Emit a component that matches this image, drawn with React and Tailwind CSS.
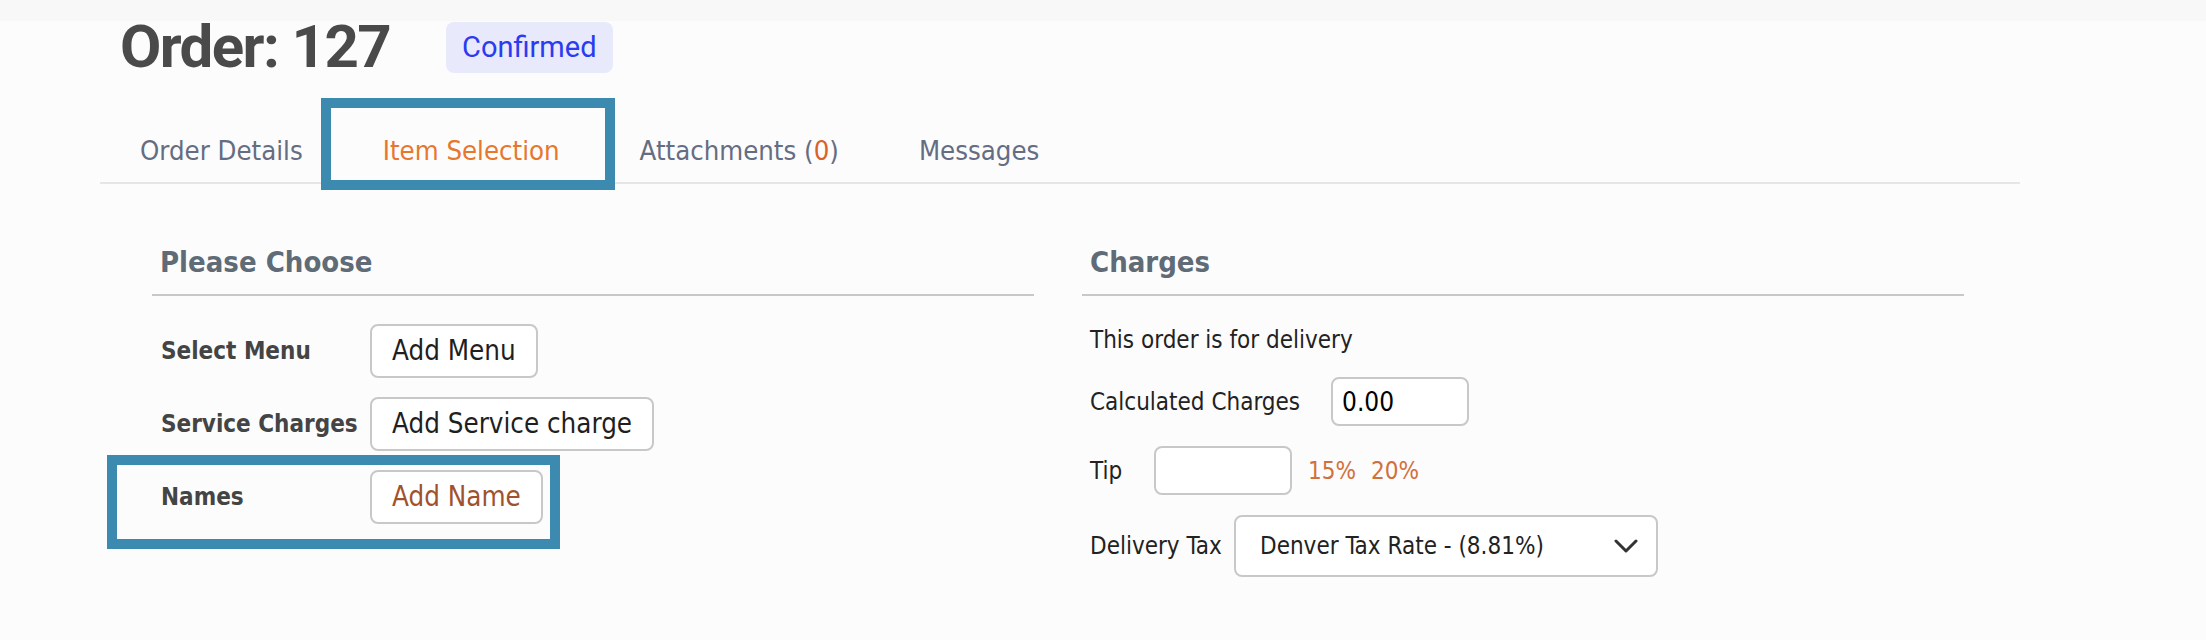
import React from 'react';

const tabs = ['Order Details', 'Item Selection', 'Attachments', 'Messages'];

const ChooseRow = ({ label, action, highlight, brown }) => (
    <div className="relative flex items-center h-[54px]">
        {highlight && (
            <div className="absolute left-[-54px] top-[-15px] w-[453px] h-[94px] border-[10px] border-[#3d8ab0]" />
        )}
        <div className="w-[209px] text-[24px] font-bold text-[#444]">{label}</div>
        <button
            className={`h-[54px] px-[20px] border-2 border-[#c8c8c8] rounded-[8px] bg-white text-[27.5px] ${
                brown ? 'text-[#a0522d]' : 'text-[#1f1f1f]'
            }`}
        >
            {action}
        </button>
    </div>
);

const App = () => {
    return (
        <div className="w-[2206px] min-h-[640px] bg-[#fcfcfc] font-['DejaVu_Sans_Condensed','DejaVu_Sans',sans-serif]">
            <div className="h-[21px] bg-[#f8f8f8]" />

            <div className="ml-[100px] w-[1920px]">
                {/* Header */}
                <div className="flex items-start pl-[20px]">
                    <h1 className="font-['Roboto',sans-serif] font-bold text-[60px] leading-[52px] tracking-[-1.6px] text-[#4a4a4a]">
                        Order: 127
                    </h1>
                    <span className="ml-[56px] mt-[1px] h-[51px] px-[16px] flex items-center rounded-[8px] bg-[#e8eafc] text-[#2b3cf0] text-[29px] font-['Roboto',sans-serif]">
                        Confirmed
                    </span>
                </div>

                {/* Tabs */}
                <div className="mt-[58px] flex border-b-2 border-[#e6e6e6]">
                    {tabs.map((tab) => (
                        <div
                            key={tab}
                            className={`relative px-[40px] pb-[11px] text-[27.3px] leading-[40px] ${
                                tab === 'Item Selection' ? 'text-[#e8772e]' : 'text-[#656d82]'
                            }`}
                        >
                            {tab === 'Item Selection' && (
                                <div className="absolute left-[-22px] right-[-15px] top-[-33px] bottom-[-8px] border-[10px] border-[#3d8ab0]" />
                            )}
                            {tab === 'Attachments' ? (
                                <>
                                    Attachments (<span className="text-[#d9622b]">0</span>)
                                </>
                            ) : (
                                tab
                            )}
                        </div>
                    ))}
                </div>

                {/* Content */}
                <div className="mt-[60px] pl-[52px] pr-[56px] grid grid-cols-2 gap-[48px]">
                    <div>
                        <h2 className="pl-[8px] pb-[14px] border-b-2 border-[#c8c8c8] text-[29px] leading-[36px] font-bold text-[#5f6b76]">
                            Please Choose
                        </h2>
                        <div className="mt-[28px] pl-[9px] flex flex-col gap-[19px]">
                            <ChooseRow label="Select Menu" action="Add Menu" />
                            <ChooseRow label="Service Charges" action="Add Service charge" />
                            <ChooseRow label="Names" action="Add Name" highlight brown />
                        </div>
                    </div>

                    <div>
                        <h2 className="pl-[8px] pb-[14px] border-b-2 border-[#c8c8c8] text-[29px] leading-[36px] font-bold text-[#5f6b76]">
                            Charges
                        </h2>
                        <div className="pl-[8px] text-[24px] leading-[32px] text-[#222]">
                            <p className="mt-[28px]">This order is for delivery</p>

                            <div className="mt-[21px] flex items-center">
                                <span className="w-[241px]">Calculated Charges</span>
                                <input
                                    readOnly
                                    value="0.00"
                                    className="w-[138px] h-[49px] pl-[9px] border-2 border-[#c8c8c8] rounded-[8px] bg-white text-[26px] text-black"
                                />
                            </div>

                            <div className="mt-[20px] flex items-center">
                                <span className="w-[64px]">Tip</span>
                                <input
                                    readOnly
                                    value=""
                                    className="w-[138px] h-[49px] border-2 border-[#c8c8c8] rounded-[8px] bg-white"
                                />
                                <span className="ml-[16px] text-[#d2703d]">15%</span>
                                <span className="ml-[15px] text-[#d2703d]">20%</span>
                            </div>

                            <div className="mt-[20px] flex items-center">
                                <span className="w-[144px]">Delivery Tax</span>
                                <div className="w-[424px] h-[62px] pl-[24px] pr-[18px] flex items-center justify-between border-2 border-[#c8c8c8] rounded-[8px] bg-white">
                                    <span>Denver Tax Rate - (8.81%)</span>
                                    <svg width="24" height="14" viewBox="0 0 24 14" fill="none">
                                        <path d="M2 2l10 10L22 2" stroke="#333" strokeWidth="3" strokeLinecap="round" strokeLinejoin="round" />
                                    </svg>
                                </div>
                            </div>
                        </div>
                    </div>
                </div>
            </div>
        </div>
    );
};

export default App;
